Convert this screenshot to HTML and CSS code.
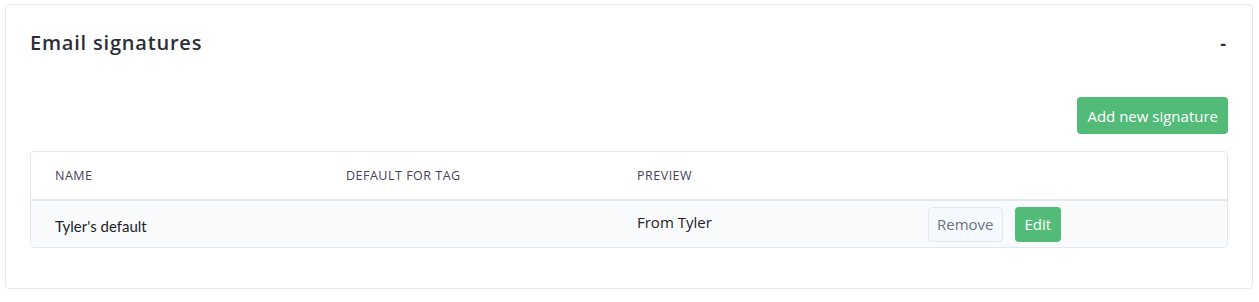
FILE: index.html
```html
<!DOCTYPE html>
<html lang="en">
<head>
  <meta charset="UTF-8" />
  <title>Email signatures</title>
  <link rel="stylesheet" href="styles.css">
</head>
<body>
  <section class="card">
    <div class="card-head">
      <h2>Email signatures</h2>
      <span class="toggle">-</span>
    </div>

    <div class="actions">
      <button class="btn btn-green">Add new signature</button>
    </div>

    <div class="table">
      <div class="row head">
        <div class="cell">Name</div>
        <div class="cell">Default for tag</div>
        <div class="cell">Preview</div>
        <div class="cell"></div>
      </div>
      <div class="row body">
        <div class="cell name">Tyler's default</div>
        <div class="cell"></div>
        <div class="cell preview">From Tyler</div>
        <div class="cell buttons">
          <button class="btn btn-light">Remove</button>
          <button class="btn btn-green btn-small">Edit</button>
        </div>
      </div>
    </div>
  </section>
</body>
</html>
```

FILE: styles.css
```css
* { box-sizing: border-box; }

body {
  margin: 0;
  padding: 4px 6px 4px 5px;
  font-family: 'Open Sans', sans-serif;
  color: #2d2d38;
  background: #fff;
}

.card {
  border: 1px solid #e2e8f0;
  border-radius: 4px;
  padding: 24px 24px 40px 24px;
}

.card-head {
  display: flex;
  justify-content: space-between;
  align-items: center;
  height: 27px;
}

h2 {
  margin: 0;
  font-size: 20px;
  font-weight: 600;
  letter-spacing: 0.8px;
  color: #2d2d38;
}

.toggle {
  font-size: 18px;
  font-weight: 700;
  margin-right: 2px;
}

.actions {
  display: flex;
  justify-content: flex-end;
  margin-top: 41px;
}

.btn {
  font-family: 'Open Sans', sans-serif;
  border-radius: 4px;
  cursor: pointer;
}

.btn-green {
  background: #52bb78;
  color: #fff;
  border: none;
  font-size: 15px;
  height: 37px;
  padding: 0 10px;
}

.btn-small {
  height: 35px;
  padding: 0 10px;
}

.btn-light {
  background: #f5f8fc;
  color: #6b7280;
  border: 1px solid #e2e8f0;
  font-size: 15px;
  height: 35px;
  padding: 0 8px;
}

.table {
  margin-top: 17px;
  border: 1px solid #e2e8f0;
  border-radius: 4px;
  overflow: hidden;
}

.row {
  display: grid;
  grid-template-columns: 291px 291px 291px 1fr;
}

.cell {
  padding: 0 24px;
  display: flex;
  align-items: center;
}

.head {
  height: 49px;
  border-bottom: 2px solid #e2e8f0;
  font-size: 12.5px;
  text-transform: uppercase;
  color: #45435a;
  letter-spacing: 0.5px;
}

.body {
  height: 46px;
  background: #f9fafb;
  font-size: 15px;
}

.name {
  font-family: 'Lato', sans-serif;
  color: #22222a;
  padding-top: 4px;
}

.preview {
  color: #22222a;
  padding-bottom: 4px;
}

.buttons {
  gap: 12px;
}
```
